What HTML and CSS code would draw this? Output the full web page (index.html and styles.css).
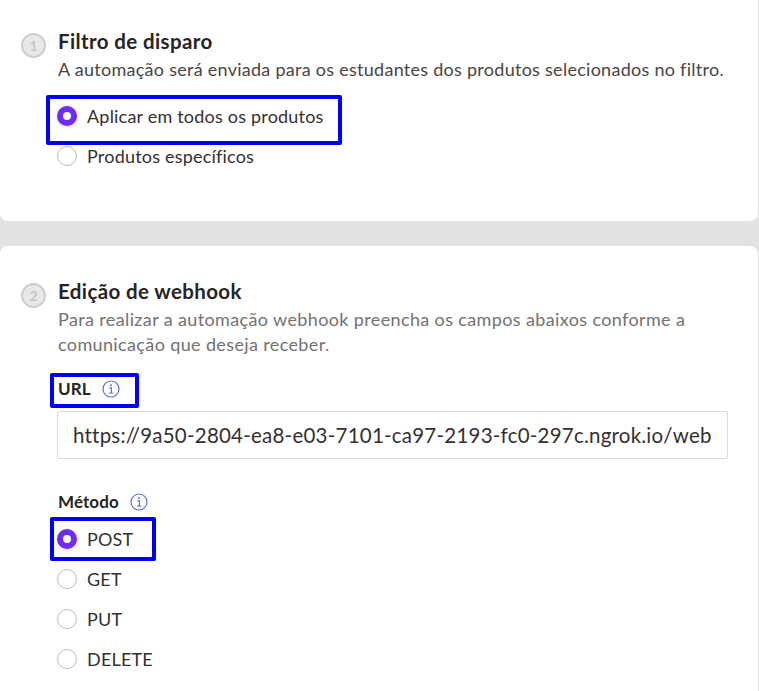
FILE: index.html
```html
<!DOCTYPE html>
<html lang="pt-BR">
  <head>
    <meta charset="UTF-8" />
    <meta name="viewport" content="width=device-width, initial-scale=1.0" />
    <title>Edição de webhook</title>
    <link rel="stylesheet" href="styles.css">
  </head>
  <body>
    <section class="card card-first">
      <div class="step">1</div>
      <div class="step-body">
        <h2>Filtro de disparo</h2>
        <p class="desc-dark">A automação será enviada para os estudantes dos produtos selecionados no filtro.</p>
        <div class="radio-list list-first">
          <div class="radio-row"><span class="radio checked"></span>Aplicar em todos os produtos</div>
          <div class="radio-row"><span class="radio"></span>Produtos específicos</div>
        </div>
      </div>
    </section>

    <section class="card card-second">
      <div class="step">2</div>
      <div class="step-body">
        <h2>Edição de webhook</h2>
        <p class="desc">Para realizar a automação webhook preencha os campos abaixos conforme a comunicação que deseja receber.</p>
        <div class="field-label label-url">URL
          <svg class="info" viewBox="0 0 18 18"><circle cx="9" cy="9" r="8" /><path d="M7.4 7.8h2v5.2M7 13h4.2" /><circle class="dot" cx="9" cy="5.2" r="1" /></svg>
        </div>
        <div class="input">https://9a50-2804-ea8-e03-7101-ca97-2193-fc0-297c.ngrok.io/web</div>
        <div class="field-label label-method">Método
          <svg class="info" viewBox="0 0 18 18"><circle cx="9" cy="9" r="8" /><path d="M7.4 7.8h2v5.2M7 13h4.2" /><circle class="dot" cx="9" cy="5.2" r="1" /></svg>
        </div>
        <div class="radio-list list-method">
          <div class="radio-row"><span class="radio checked"></span>POST</div>
          <div class="radio-row"><span class="radio"></span>GET</div>
          <div class="radio-row"><span class="radio"></span>PUT</div>
          <div class="radio-row"><span class="radio"></span>DELETE</div>
        </div>
      </div>
    </section>

    <div class="mark mark-all"></div>
    <div class="mark mark-url"></div>
    <div class="mark mark-post"></div>
  </body>
</html>
```

FILE: styles.css
```css
* {
  margin: 0;
  padding: 0;
  box-sizing: border-box;
}
html {
  background: #fff;
}
body {
  position: relative;
  width: 759px;
  height: 691px;
  overflow: hidden;
  font-family: "Lato", "Noto Sans", sans-serif;
  font-size: 18px;
  letter-spacing: 0.27px;
  color: #35302f;
  background: #e2e2e2;
}
.card {
  display: flex;
  width: 758px;
  background: #fff;
  padding-left: 21px;
}
.card-first {
  height: 221px;
  padding-top: 29px;
  border-radius: 0 0 8px 8px;
}
.card-second {
  height: 445px;
  margin-top: 25px;
  padding-top: 33px;
  border-radius: 8px 8px 0 0;
}
.step {
  flex: none;
  width: 25px;
  height: 25px;
  margin-top: 4px;
  margin-right: 12px;
  border: 2px solid #cdcdcd;
  border-radius: 50%;
  background: #e8e8e8;
  color: #c4c4c4;
  font-size: 14px;
  font-weight: 700;
  line-height: 21px;
  text-align: center;
  letter-spacing: 0;
}
.step-body {
  flex: 1;
  min-width: 0;
}
h2 {
  font-size: 20.5px;
  font-weight: 700;
  line-height: 24px;
  letter-spacing: 0.38px;
  color: #282423;
}
.desc-dark {
  margin-top: 4px;
  line-height: 25px;
  white-space: nowrap;
  color: #4a4544;
}
.desc {
  margin-top: 4px;
  line-height: 25px;
  letter-spacing: 0.37px;
  color: #757170;
  width: 670px;
}
.radio-list {
  display: flex;
  flex-direction: column;
  margin-left: -1px;
  letter-spacing: 0.2px;
}
.list-first {
  margin-top: 14px;
}
.list-method {
  margin-top: 7px;
}
.radio-row {
  display: flex;
  align-items: center;
  gap: 10px;
  height: 40px;
}
.radio {
  flex: none;
  width: 20px;
  height: 20px;
  border: 1px solid #b9bcc2;
  border-radius: 50%;
  background: #fff;
}
.radio.checked {
  border: 6px solid #6f2cf0;
  box-shadow: 0 1px 4px rgba(111, 44, 240, 0.25);
}
.field-label {
  display: flex;
  align-items: center;
  gap: 11px;
  font-size: 17px;
  font-weight: 700;
  letter-spacing: 0.1px;
  color: #282423;
  line-height: 20px;
}
.label-url {
  margin-top: 22px;
}
.label-method {
  margin-top: 33px;
}
.info {
  width: 18px;
  height: 18px;
  fill: none;
  stroke: #5a6fd8;
  stroke-width: 1.2;
}
.info .dot {
  fill: #5a6fd8;
  stroke: none;
}
.input {
  width: 671px;
  height: 48px;
  margin-top: 12px;
  margin-left: -1px;
  padding: 0 15px;
  border: 1px solid #d9dadd;
  border-radius: 2px;
  overflow: hidden;
  font-size: 20.5px;
  letter-spacing: 0.22px;
  line-height: 46px;
  white-space: nowrap;
  color: #35302f;
}
.mark {
  position: absolute;
  border: 4px solid #0000f5;
  border-radius: 2px;
}
.mark-all {
  left: 46px;
  top: 95px;
  width: 296px;
  height: 50px;
}
.mark-url {
  left: 50px;
  top: 373px;
  width: 89px;
  height: 35px;
}
.mark-post {
  left: 50px;
  top: 517px;
  width: 106px;
  height: 44px;
}
```
